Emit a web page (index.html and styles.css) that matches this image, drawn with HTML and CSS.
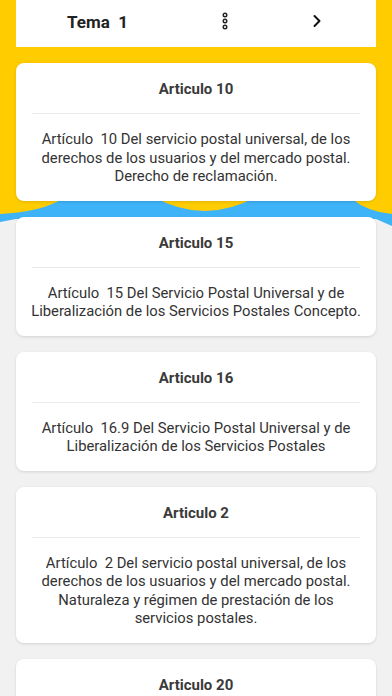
FILE: index.html
```html
<!DOCTYPE html>
<html lang="es">
<head>
<meta charset="utf-8">
<title>Tema 1</title>
<link rel="stylesheet" href="styles.css">
</head>
<body>
<svg class="bg" width="392" height="240" viewBox="0 0 392 240" aria-hidden="true">
  <path fill="#3fb3f7" d="M0,0 H392 V226 L376,219 H16 L0,222 Z"/>
  <path fill="#ffcc00" d="M0,0 H392 V214 Q368,212 352,199 L300,190 L258,196 Q205,226 152,196 L100,190 L64,198 Q42,212 0,214 Z"/>
</svg>
<header class="topbar">
  <span class="topbar-title">Tema&nbsp; 1</span>
  <span class="topbar-menu">
    <svg width="8" height="18" viewBox="0 0 8 18"><circle cx="4" cy="3" r="1.8" fill="none" stroke="#222" stroke-width="1.4"/><circle cx="4" cy="9" r="1.8" fill="none" stroke="#222" stroke-width="1.4"/><circle cx="4" cy="15" r="1.8" fill="none" stroke="#222" stroke-width="1.4"/></svg>
  </span>
  <span class="topbar-next">
    <svg width="10" height="14" viewBox="0 0 10 14"><path d="M2.5 2 L7.5 7 L2.5 12" fill="none" stroke="#111" stroke-width="2" stroke-linecap="round" stroke-linejoin="round"/></svg>
  </span>
</header>
<main class="list">
  <section class="card">
    <h2 class="card-title">Articulo 10</h2>
    <p class="card-text">Artículo&nbsp; 10 Del servicio postal universal, de los derechos de los usuarios y del mercado postal. Derecho de reclamación.</p>
  </section>
  <section class="card">
    <h2 class="card-title">Articulo 15</h2>
    <p class="card-text">Artículo&nbsp; 15 Del Servicio Postal Universal y de Liberalización de los Servicios Postales Concepto.</p>
  </section>
  <section class="card">
    <h2 class="card-title">Articulo 16</h2>
    <p class="card-text">Artículo&nbsp; 16.9 Del Servicio Postal Universal y de Liberalización de los Servicios Postales</p>
  </section>
  <section class="card">
    <h2 class="card-title">Articulo 2</h2>
    <p class="card-text">Artículo&nbsp; 2 Del servicio postal universal, de los derechos de los usuarios y del mercado postal. Naturaleza y régimen de prestación de los servicios postales.</p>
  </section>
  <section class="card">
    <h2 class="card-title">Articulo 20</h2>
    <p class="card-text">Artículo&nbsp; 20 Del servicio postal universal, de los derechos de los usuarios y del mercado postal.</p>
  </section>
</main>
</body>
</html>
```
FILE: styles.css
```css
html, body {
  margin: 0;
  padding: 0;
}
body {
  position: relative;
  background: #f1f1f1;
  font-family: Roboto, "Noto Sans", sans-serif;
  height: 696px;
  overflow: hidden;
}
.bg {
  position: absolute;
  left: 0;
  top: 0;
  z-index: 0;
}
.topbar {
  position: relative;
  z-index: 1;
  margin: 0 16px;
  height: 47px;
  background: #fff;
  display: flex;
  align-items: center;
}
.topbar-title {
  margin-left: 51px;
  margin-top: -4px;
  font-size: 17px;
  font-weight: 700;
  color: #222;
  width: 150px;
}
.topbar-menu {
  margin-left: 4px;
  display: flex;
  margin-top: -6px;
}
.topbar-next {
  margin-left: 83px;
  display: flex;
  margin-top: -6px;
}
.list {
  position: relative;
  z-index: 1;
  padding: 16px 16px 0;
  display: flex;
  flex-direction: column;
  gap: 16px;
}
.card {
  background: #fff;
  border-radius: 8px;
  padding: 0 16px;
  box-shadow: 0 1px 3px rgba(0, 0, 0, 0.13);
}
.card-title {
  margin: 0;
  padding: 14px 0 12px;
  line-height: 24px;
  font-size: 15px;
  font-weight: 700;
  color: #3a3a3a;
  text-align: center;
  border-bottom: 1px solid #e9e9e9;
}
.card-text {
  margin: 0 -2px;
  padding: 16px 0 15px;
  font-size: 14.8px;
  line-height: 18.5px;
  color: #333;
  text-align: center;
}
```
